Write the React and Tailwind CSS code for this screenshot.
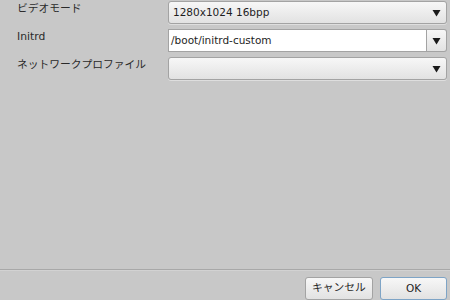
import React from 'react';

const font = { fontFamily: '"DejaVu Sans", "Noto Sans CJK JP", sans-serif' };

const Arrow = () => (
  <svg width="9" height="8" viewBox="0 0 9 8" className="shrink-0">
    <path d="M0.5 1 L8.5 1 L4.5 7.5 Z" fill="#1a1a1a" />
  </svg>
);

const Combo = ({ value }) => (
  <div className="flex h-[23px] items-center justify-between rounded-[3px] border border-[#a3a3a3] bg-gradient-to-b from-[#f7f7f7] to-[#e2e2e2] pl-[4px] pr-[5px] text-[10.5px] text-[#1e1e1e] shadow-[0_1px_0_rgba(255,255,255,0.4)]">
    <span>{value}</span>
    <Arrow />
  </div>
);

const ComboEntry = ({ value }) => (
  <div className="flex h-[23px]">
    <div className="flex flex-1 items-center border border-[#a3a3a3] bg-white pl-[2px] text-[10.5px] text-[#1e1e1e]">
      {value}
    </div>
    <div className="flex w-[20px] items-center justify-center rounded-r-[3px] border border-l-0 border-[#a3a3a3] bg-gradient-to-b from-[#f7f7f7] to-[#e2e2e2]">
      <Arrow />
    </div>
  </div>
);

export default function App() {
  const rows = [
    { label: 'ビデオモード', el: <Combo value="1280x1024 16bpp" /> },
    { label: 'Initrd', el: <ComboEntry value="/boot/initrd-custom" /> },
    { label: 'ネットワークプロファイル', el: <Combo value="" /> },
  ];
  return (
    <div className="flex h-[300px] w-[450px] flex-col overflow-hidden bg-[#c8c8c8]" style={font}>
      <div className="flex flex-1 flex-col gap-[5px] pt-[1px] pl-[17px] pr-[3px]">
        {rows.map((r) => (
          <div key={r.label} className="flex items-start">
            <div className="w-[151px] pt-[1px] text-[10.75px] leading-[13px] text-[#2a2a2a]">{r.label}</div>
            <div className="flex-1">{r.el}</div>
          </div>
        ))}
      </div>
      <div className="h-[2px] border-t border-[#a8a8a8] bg-[#d2d2d2]" />
      <div className="flex h-[29px] items-start justify-end gap-[7px] pt-[6px] pr-[3px]">
        <button className="h-[23px] w-[68px] rounded-[3px] border border-[#a3a3a3] bg-gradient-to-b from-[#f7f7f7] to-[#e2e2e2] text-[10.75px] text-[#1e1e1e]">
          キャンセル
        </button>
        <button className="h-[23px] w-[67px] rounded-[3px] border border-[#7ea4c6] bg-gradient-to-b from-[#f7f7f7] to-[#e2e2e2] text-[10.5px] text-[#1e1e1e]">
          OK
        </button>
      </div>
    </div>
  );
}
